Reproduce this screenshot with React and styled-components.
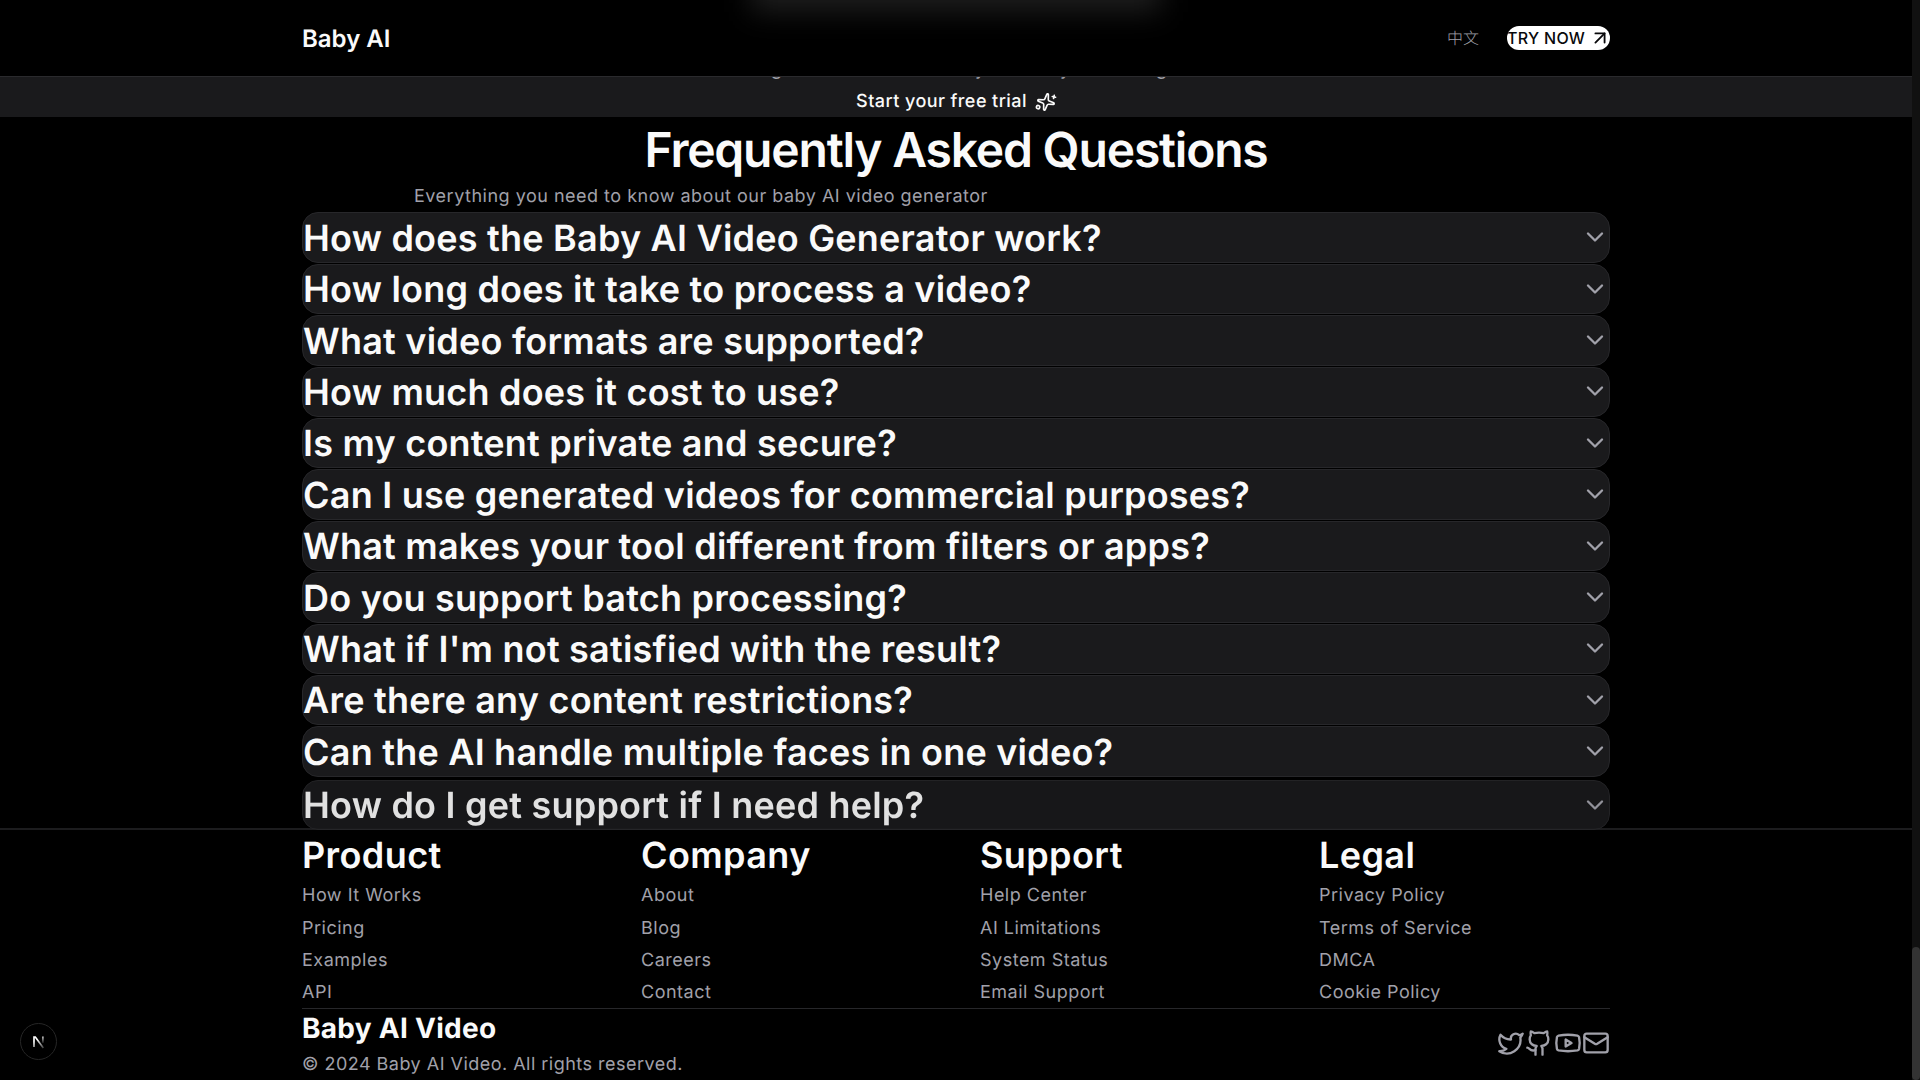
import React from "react";
import styled, { createGlobalStyle } from "styled-components";
import { ArrowUpRight, ChevronDown, Sparkles, Twitter, Github, Youtube, Mail } from "lucide-react";

const Global = createGlobalStyle`
  html, body { margin: 0; padding: 0; background: #000; overflow: hidden; }
  * { box-sizing: border-box; }
  body { font-family: Inter, "Noto Sans CJK SC", sans-serif; line-height: 1.4; color: #fafafa; text-rendering: geometricPrecision; }
  h1, h2, h3, p, ul { margin: 0; padding: 0; }
`;

const Viewport = styled.div`
  display: flex;
  width: 1920px;
  height: 1080px;
  overflow: hidden;
  position: relative;
`;
const Page = styled.div`
  flex: 1;
  min-width: 0;
  display: flex;
  flex-direction: column;
`;
const Track = styled.div`
  width: 8px;
  background: #111;
  display: flex;
  flex-direction: column;
  justify-content: flex-end;
`;
const Thumb = styled.div`
  height: 133px;
  background: #333;
  border-radius: 4px;
`;
const Container = styled.div`
  width: 1308px;
  margin: 0 auto;
`;
const Header = styled.header`
  height: 77px;
  border-bottom: 1px solid #2a2a2d;
  position: relative;
  overflow: hidden;
  background: #000;
`;
const Glow = styled.div`
  position: absolute;
  left: 50%;
  top: -34px;
  width: 410px;
  height: 46px;
  transform: translateX(-50%);
  background: #1d1d1d;
  filter: blur(14px);
`;
const HeaderInner = styled(Container)`
  height: 76px;
  display: flex;
  align-items: center;
  justify-content: space-between;
  position: relative;
`;
const Logo = styled.div`
  font-size: 24px;
  font-weight: 600;
  color: #fafafa;
  padding-top: 2px;
`;
const HeaderActions = styled.div`
  display: flex;
  align-items: center;
  gap: 28px;
`;
const Lang = styled.span`
  font-size: 16px;
  font-weight: 300;
  line-height: 22px;
  color: #a1a1aa;
  font-family: "Noto Sans CJK SC", sans-serif;
  padding-bottom: 2px;
`;
const TryButton = styled.button`
  width: 103px;
  height: 24px;
  padding: 0;
  border: 0;
  border-radius: 12px;
  background: #fff;
  color: #09090b;
  font: 500 16px/24px Inter, sans-serif;
  letter-spacing: 0.3px;
  display: flex;
  align-items: center;
  justify-content: space-between;
  overflow: hidden;
  white-space: nowrap;
`;
const TryArrow = styled(ArrowUpRight)`
  flex: none;
  margin-right: -1px;
`;
const Banner = styled.div`
  height: 40px;
  background: #1a1a1c;
  position: relative;
  overflow: hidden;
  display: flex;
  align-items: center;
  justify-content: center;
  gap: 9px;
  font-size: 18px;
  font-weight: 500;
  letter-spacing: 0.43px;
  color: #fafafa;
  padding-top: 10px;
`;
const BannerIcon = styled(Sparkles)`
  transform: rotate(12deg);
`;
const Descender = styled.span`
  position: absolute;
  top: -20px;
  left: ${(p) => p.$x}px;
  font-size: 18px;
  font-weight: 400;
  line-height: 25px;
  color: #a1a1aa;
`;
const Title = styled.h2`
  font-size: 48px;
  font-weight: 600;
  letter-spacing: -1.2px;
  text-align: center;
  color: #fafafa;
  margin: -1px 0 1px;
`;
const Subtitle = styled.p`
  font-size: 18px;
  letter-spacing: 0.5px;
  color: #a1a1aa;
  padding-left: 112px;
  margin-bottom: 3px;
`;
const List = styled.div`
  display: flex;
  flex-direction: column;
  gap: 1px;
`;
const Row = styled.div`
  height: 50.4px;
  border: 1px solid #27272a;
  border-radius: 16px;
  background: #1a1a1c;
  display: flex;
  align-items: center;
  justify-content: space-between;
  position: relative;
  z-index: 1;
  opacity: ${(p) => (p.$entering ? 0.9 : 1)};
  transform: translateY(${(p) => (p.$entering ? 2 : 0)}px);
`;
const Question = styled.h3`
  font-size: 36px;
  font-weight: 600;
  line-height: 48.4px;
  letter-spacing: 0.22px;
  color: #fafafa;
  white-space: nowrap;
  padding-top: 1px;
`;
const Chevron = styled(ChevronDown)`
  color: #a1a1aa;
  flex: none;
  margin-bottom: 0.5px;
`;
const Footer = styled.footer`
  border-top: 2px solid #1c1c1e;
  height: 251px;
`;
const Columns = styled.div`
  display: grid;
  grid-template-columns: repeat(4, 1fr);
  gap: 48px;
`;
const ColumnTitle = styled.h3`
  font-size: 36px;
  font-weight: 600;
  letter-spacing: 0.4px;
  color: #fafafa;
  margin-bottom: 3px;
  padding-top: 1px;
  line-height: 49.4px;
`;
const Links = styled.ul`
  list-style: none;
  display: flex;
  flex-direction: column;
  gap: 7px;
  padding-bottom: 3px;
`;
const LinkItem = styled.li`
  font-size: 18px;
  letter-spacing: 0.5px;
  color: #a1a1aa;
`;
const Bottom = styled.div`
  border-top: 1px solid #27272a;
  display: flex;
  align-items: center;
  justify-content: space-between;
`;
const Brand = styled.div`
  font-size: 28px;
  font-weight: 700;
  letter-spacing: 0.28px;
  color: #fafafa;
`;
const Copy = styled.p`
  font-size: 18px;
  letter-spacing: 0.48px;
  color: #a1a1aa;
  margin-top: 4px;
`;
const Socials = styled.div`
  display: flex;
  gap: 0.5px;
  color: #a1a1aa;
`;
const DevBadge = styled.div`
  position: absolute;
  left: 20px;
  top: 1023px;
  width: 37px;
  height: 37px;
  border-radius: 50%;
  background: #000;
  border: 1.5px solid #262626;
  display: flex;
  align-items: center;
  justify-content: center;
`;

const faqs = [
  "How does the Baby AI Video Generator work?",
  "How long does it take to process a video?",
  "What video formats are supported?",
  "How much does it cost to use?",
  "Is my content private and secure?",
  "Can I use generated videos for commercial purposes?",
  "What makes your tool different from filters or apps?",
  "Do you support batch processing?",
  "What if I'm not satisfied with the result?",
  "Are there any content restrictions?",
  "Can the AI handle multiple faces in one video?",
  "How do I get support if I need help?",
];
const columns = [
  ["Product", ["How It Works", "Pricing", "Examples", "API"]],
  ["Company", ["About", "Blog", "Careers", "Contact"]],
  ["Support", ["Help Center", "AI Limitations", "System Status", "Email Support"]],
  ["Legal", ["Privacy Policy", "Terms of Service", "DMCA", "Cookie Policy"]],
];

export default function App() {
  return (
    <Viewport>
      <Global />
      <Page>
        <Header>
          <Glow />
          <HeaderInner>
            <Logo>Baby AI</Logo>
            <HeaderActions>
              <Lang>中文</Lang>
              <TryButton>
                TRY NOW
                <TryArrow size={22} strokeWidth={2} />
              </TryButton>
            </HeaderActions>
          </HeaderInner>
        </Header>
        <Banner>
          <Descender $x={771}>g</Descender>
          <Descender $x={975}>y</Descender>
          <Descender $x={1060}>y</Descender>
          <Descender $x={1156}>g</Descender>
          Start your free trial
          <BannerIcon size={20} strokeWidth={2} />
        </Banner>
        <Container>
          <Title>Frequently Asked Questions</Title>
          <Subtitle>Everything you need to know about our baby AI video generator</Subtitle>
          <List>
            {faqs.map((q, i) => (
              <Row key={q} $entering={i === faqs.length - 1}>
                <Question>{q}</Question>
                <Chevron size={28} strokeWidth={2} />
              </Row>
            ))}
          </List>
        </Container>
        <Footer>
          <Container>
            <Columns>
              {columns.map(([title, links]) => (
                <div key={title}>
                  <ColumnTitle>{title}</ColumnTitle>
                  <Links>
                    {links.map((l) => (
                      <LinkItem key={l}>{l}</LinkItem>
                    ))}
                  </Links>
                </div>
              ))}
            </Columns>
            <Bottom>
              <div>
                <Brand>Baby AI Video</Brand>
                <Copy>© 2024 Baby AI Video. All rights reserved.</Copy>
              </div>
              <Socials>
                <Twitter size={28} />
                <Github size={28} />
                <Youtube size={28} />
                <Mail size={28} />
              </Socials>
            </Bottom>
          </Container>
        </Footer>
      </Page>
      <Track>
        <Thumb />
      </Track>
      <DevBadge>
        <svg width="20" height="20" viewBox="0 0 18 18" fill="none" aria-hidden="true">
          <defs>
            <linearGradient id="nfade" x1="9" y1="6" x2="14" y2="15" gradientUnits="userSpaceOnUse">
              <stop stopColor="#fff" />
              <stop offset="1" stopColor="#fff" stopOpacity="0.15" />
            </linearGradient>
            <linearGradient id="nfade2" x1="12.5" y1="3" x2="12.5" y2="10" gradientUnits="userSpaceOnUse">
              <stop stopColor="#fff" />
              <stop offset="1" stopColor="#fff" stopOpacity="0.1" />
            </linearGradient>
          </defs>
          <path d="M4.5 13.5V4.5h1.2l7.2 10" stroke="url(#nfade)" strokeWidth="1.5" />
          <path d="M12.5 4v6" stroke="url(#nfade2)" strokeWidth="1.4" />
        </svg>
      </DevBadge>
    </Viewport>
  );
}
